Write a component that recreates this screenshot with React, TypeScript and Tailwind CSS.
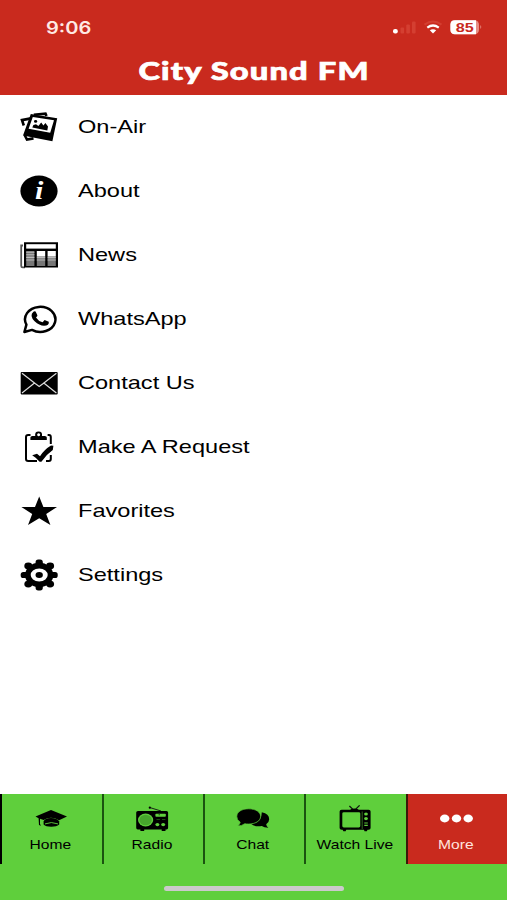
import type { ReactNode } from "react";

type TMenuItem = {
  label: string;
  icon: ReactNode;
};

const OnAirIcon = () => (
  <svg className="h-8 w-[38px]" viewBox="0 0 38 32">
    <path
      d="M11 7.4 2 9.1 3.8 14.5M13.8 3.8 25.5 2.6l1 2.4M4.6 24l2.4 4.6 6.5-1.2"
      fill="none"
      stroke="#000"
      strokeWidth="2.6"
    />
    <path
      fillRule="evenodd"
      d="M10.8 3 37.2 7.2 32.4 30.2 3 24.6ZM12.8 5.9 8.6 17.8 30.2 21.8 34 9.2Z"
    />
    <path d="M12.3 16.6 13.4 14 16 13.2 18.4 15 21.2 11.6 23.4 14.4 25.4 12 28 15.4 27.3 19.4Z" />
    <ellipse cx="15.6" cy="10.4" rx="1.6" ry="1.3" />
  </svg>
);

const AboutIcon = () => (
  <svg className="h-8 w-[38px]" viewBox="0 0 38 32">
    <ellipse cx="19" cy="16" rx="18.6" ry="15.5" />
    <text
      x="0"
      y="0"
      transform="translate(19.2 24) scale(1.2 1)"
      textAnchor="middle"
      fill="#fff"
      fontFamily="Liberation Serif"
      fontSize="25"
      fontStyle="italic"
      fontWeight="700"
    >
      i
    </text>
  </svg>
);

const NewsIcon = () => (
  <svg className="h-8 w-[38px]" viewBox="0 0 38 32">
    <path d="M3 6.5H1.2V27q0 1.3 1.5 1.3H5" fill="none" stroke="#555" strokeWidth="1.8" />
    <path d="M4 3.2h34v25.4H4Z" />
    <path d="M6.2 5.2h29.6v4.4H6.2Z" fill="#fff" />
    <path d="M6.2 12h8.2v15H6.2ZM16.8 17.2h8.4V27h-8.4ZM27.6 17.2h8.2V27h-8.2Z" fill="#777" />
    <path d="M16.8 12h8.4v5.4h-8.4ZM27.6 12h8.2v5.4h-8.2Z" fill="#fff" />
    <path
      d="M6.2 13.2h8.2M6.2 15.8h8.2M6.2 18.4h8.2M6.2 21h8.2M16.8 18.6h8.4M27.6 18.6h8.2M16.8 21h8.4M27.6 21h8.2"
      stroke="#bbb"
      strokeWidth="1.1"
    />
  </svg>
);

const WhatsAppIcon = () => (
  <svg className="h-8 w-[38px]" viewBox="0 0 38 32">
    <path
      d="M4.4 29 6.4 21.6A15.2 12.5 0 1 1 12 26.9Z"
      fill="none"
      stroke="#000"
      strokeWidth="2.5"
      strokeLinejoin="round"
    />
    <path d="M13.4 8.7q1-.6 2.2-.1l1.8 3.7q.2.7-1.4 2.1 2.2 3.6 6.6 4.8l2-2.2 4.2 1.8q.6 3.8-4.8 4-4.6-.2-9.4-4.5Q9.1 12.4 13.4 8.7Z" />
  </svg>
);

const MailIcon = () => (
  <svg className="h-8 w-[38px]" viewBox="0 0 38 32">
    <rect x=".7" y="5" width="37" height="22.4" rx="1" />
    <path
      d="M2 6.3 15.5 16.8 19.2 19.5 22.9 16.8 36.4 6.3M2 26 14.5 16M36.4 26 23.8 16"
      fill="none"
      stroke="#ddd"
      strokeWidth="1.2"
    />
  </svg>
);

const RequestIcon = () => (
  <svg className="h-8 w-[38px]" viewBox="0 0 38 32">
    <path
      d="M10.5 4H8.2Q6 4 6 6V28Q6 30 8.2 30H17M27.6 4H29Q30.8 4 30.8 6V13M30.8 24v4Q30.8 30 28.8 30H26"
      fill="none"
      stroke="#000"
      strokeWidth="2"
    />
    <path
      fillRule="evenodd"
      d="M10.4 9V6.6Q10.4 5.1 12.4 5H15.2Q14.6 .6 18.6 .6T22 5h2.8q2 0 2 1.6V9ZM18.6 2.3a1.5 1.5 0 1 0 .1 0Z"
    />
    <path d="M12.2 24.2 17 22.8 20 25.2Q24.6 18.4 31 14.6L33.4 14.8 32.8 19Q26.4 23.4 21.4 30.8L19.6 30.8Q16 26.4 12.2 24.2Z" />
  </svg>
);

const StarIcon = () => (
  <svg className="h-8 w-[38px]" viewBox="0 0 38 32">
    <path d="M19.2 1.4 23.4 12H37L26.2 18.9 30.4 30 19.2 23.2 8 30 12.2 18.9 1.4 12H15Z" />
  </svg>
);

const SettingsIcon = () => (
  <svg className="h-8 w-[38px]" viewBox="0 0 38 32">
    <ellipse cx="19.2" cy="16" rx="11.3" ry="9.4" fill="none" stroke="#000" strokeWidth="5.6" />
    <g>
      <rect x="15.6" y=".6" width="7.2" height="7" rx="2.6" />
      <rect x="15.6" y="24.4" width="7.2" height="7" rx="2.6" />
      <rect x=".7" y="12.9" width="8" height="6.2" rx="2.6" />
      <rect x="29.7" y="12.9" width="8" height="6.2" rx="2.6" />
      <ellipse cx="8.3" cy="6.9" rx="4" ry="3.4" />
      <ellipse cx="30.1" cy="6.9" rx="4" ry="3.4" />
      <ellipse cx="8.3" cy="25.1" rx="4" ry="3.4" />
      <ellipse cx="30.1" cy="25.1" rx="4" ry="3.4" />
    </g>
    <ellipse cx="19.2" cy="16" rx="3.7" ry="3" />
  </svg>
);

const HomeIcon = () => (
  <svg className="h-7 w-[34px]" viewBox="0 0 34 28">
    <path d="M1.5 11.6 17 5 33 11.6 25 15.2Q17 10.6 9.6 15L6 13.7V19L7 20.8 5 20 4.6 13.2Z" />
    <path d="M9.6 16.6Q10.6 13 17 13T25.2 16.6V19.6Q22.6 21.8 17.2 21.8T9.6 19.6Z" />
    <path d="M11 18.9Q17.2 16.2 24 18.9" fill="none" stroke="#5fcf3c" strokeWidth=".9" />
  </svg>
);

const RadioIcon = () => (
  <svg className="h-7 w-[34px]" viewBox="0 0 34 28">
    <path d="M15 2.6 26 6" stroke="#111" strokeWidth=".9" />
    <circle cx="14.8" cy="2.7" r="1.1" />
    <path d="M3 6h28.5q1.6 0 1.6 1.6v15.2q0 1.6-1.6 1.6H30.5v1.5h-3.8v-1.5H9.2v1.5H5.4v-1.5H2.8q-1.6 0-1.6-1.6V7.6Q1.2 6 3 6Z" />
    <ellipse cx="10.6" cy="15" rx="7.6" ry="6.5" fill="#5fcf3c" />
    <ellipse cx="10.6" cy="15" rx="6.2" ry="5.2" fill="#47a62d" />
    <rect x="20.4" y="8.7" width="10.4" height="3" rx=".8" fill="#5fcf3c" />
    <path d="M24.2 8.5v1.8M21.5 14.5h3.4M27 14.5h3.4" stroke="#174d0e" strokeWidth="1" />
    <ellipse cx="22.4" cy="19.6" rx="2" ry="1.7" fill="#5fcf3c" />
    <ellipse cx="28.2" cy="19.6" rx="2" ry="1.7" fill="#5fcf3c" />
  </svg>
);

const ChatIcon = () => (
  <svg className="h-7 w-[34px]" viewBox="0 0 34 28">
    <path d="M25.8 7.2Q33.2 8.8 33.2 14.2 33.2 17 30.2 19.2 30.4 21.2 32.4 22.8 28 22.5 25.8 21 18.8 22.2 14.8 18.8 25.8 18 25.8 7.2Z" />
    <path
      d="M12.6 3.8C19.6 3.8 24.6 7 24.6 11.4S19.6 19 12.6 19Q10.5 19 8.8 18.7 6 20.8 1.8 21.1 4 19.1 4.2 17.1.8 15 .8 11.4C.8 7 5.6 3.8 12.6 3.8Z"
      stroke="#5fcf3c"
      strokeWidth=".7"
    />
  </svg>
);

const TvIcon = () => (
  <svg className="h-7 w-[34px]" viewBox="0 0 34 28">
    <path d="M11.4 1 16.2 5.6 21.6.4" fill="none" stroke="#111" strokeWidth="1.3" />
    <path d="M11.8 5.4q.8-2 4.6-2t4.8 2Z" />
    <path
      fillRule="evenodd"
      d="M3.6 4.8h27q2 0 2 1.8V23q0 1.8-2 1.8h-1l-.8 1.5h-2.2l-.7-1.5H8.3l-.7 1.5H5.4l-.8-1.5h-1q-2 0-2-1.8V6.6q0-1.8 2-1.8ZM5.8 7.2q-1.5 0-1.5 1.3v12.6q0 1.3 1.5 1.3h15q1.5 0 1.5-1.3V8.5q0-1.3-1.5-1.3Z"
    />
    <path d="M24.2 6.5v17.5" stroke="#5fcf3c" strokeWidth=".5" />
    <ellipse cx="28" cy="9" rx="1.9" ry="1.6" fill="#5fcf3c" />
    <ellipse cx="28" cy="13.6" rx="1.9" ry="1.6" fill="#5fcf3c" />
    <path d="M26.3 18h3.5M26.3 20.4h3.5" stroke="#5fcf3c" strokeWidth="1.2" />
  </svg>
);

const MoreIcon = () => (
  <svg className="h-7 w-[34px]" viewBox="0 0 34 28" fill="#fff">
    <ellipse cx="5.7" cy="13.5" rx="4.7" ry="3.9" />
    <ellipse cx="17.5" cy="13.5" rx="4.7" ry="3.9" />
    <ellipse cx="29.2" cy="13.5" rx="4.7" ry="3.9" />
  </svg>
);

const menuItems: TMenuItem[] = [
  { label: "On-Air", icon: <OnAirIcon /> },
  { label: "About", icon: <AboutIcon /> },
  { label: "News", icon: <NewsIcon /> },
  { label: "WhatsApp", icon: <WhatsAppIcon /> },
  { label: "Contact Us", icon: <MailIcon /> },
  { label: "Make A Request", icon: <RequestIcon /> },
  { label: "Favorites", icon: <StarIcon /> },
  { label: "Settings", icon: <SettingsIcon /> },
];

const tabs: TMenuItem[] = [
  { label: "Home", icon: <HomeIcon /> },
  { label: "Radio", icon: <RadioIcon /> },
  { label: "Chat", icon: <ChatIcon /> },
  { label: "Watch Live", icon: <TvIcon /> },
  { label: "More", icon: <MoreIcon /> },
];

const StatusBar = () => (
  <div className="flex h-[54px] items-center justify-between pr-[25px] pl-[46px]">
    <span className="mt-0.5 origin-left scale-x-[1.18] font-['Inter'] text-[17px] leading-none font-semibold text-[#ffe9e4]">
      9:06
    </span>
    <svg className="h-4 w-[90px]" viewBox="0 0 90 16">
      <g fill="#d43f31">
        <rect x="8.5" y="8.5" width="3.6" height="6" rx="1" />
        <rect x="14.3" y="5.5" width="3.6" height="9" rx="1" />
        <rect x="20" y="2.5" width="3.6" height="12" rx="1" />
      </g>
      <rect x="1" y="10" width="4.8" height="4.6" rx="2" fill="#fff" />
      <path d="M32.5 5.6Q41 -.6 49.5 5.6" fill="none" stroke="#d43f31" strokeWidth="2" />
      <path d="M35.3 8.6Q41 4.4 46.8 8.6" fill="none" stroke="#fff" strokeWidth="2.2" />
      <path d="M37.8 11.2q3.2-2 6.4 0L41 14.4Z" fill="#fff" />
      <rect x="58.4" y="1.2" width="28.6" height="14" rx="4.4" fill="#e88d84" />
      <path d="M62.8 1.2H84v14H62.8q-4.4 0-4.4-4.4V5.6q0-4.4 4.4-4.4Z" fill="#fff" />
      <path d="M88.3 6v4q1.9-2 0-4Z" fill="#e88d84" />
      <text
        transform="translate(72.7 12.9) scale(1.2 1)"
        textAnchor="middle"
        fill="#c92a1e"
        fontFamily="Liberation Sans"
        fontSize="13.5"
        fontWeight="700"
      >
        85
      </text>
    </svg>
  </div>
);

const App = () => {
  return (
    <div className="flex h-[900px] w-[507px] flex-col overflow-hidden bg-white font-['Liberation_Sans',sans-serif] text-black">
      <header className="h-[95px] bg-[#c92a1e] text-white">
        <StatusBar />
        <h1 className="flex h-[34px] items-center justify-center font-['Lato'] text-[24px] leading-none font-black">
          <span className="scale-x-[1.36] tracking-[0.035em] [-webkit-text-stroke:0.7px_white]">
            City Sound FM
          </span>
        </h1>
      </header>

      <ul className="flex-1">
        {menuItems.map((item) => (
          <li key={item.label} className="flex h-16 items-center gap-5 pl-5">
            {item.icon}
            <span className="-mt-px origin-left scale-x-[1.24] text-[19px] leading-none whitespace-nowrap">
              {item.label}
            </span>
          </li>
        ))}
      </ul>

      <footer className="h-[106px] bg-[#5fcf3c]">
        <nav className="grid h-[70px] grid-cols-[102px_101px_101px_102px_101px]">
          {tabs.map((tab) => (
            <button
              key={tab.label}
              className="flex flex-col items-center border-l-2 border-[#1b5410] pt-[11px] pr-[3px] first:border-black last:border-[#3a1a08] last:bg-[#c92a1e] last:text-[#ffe3df]"
            >
              {tab.icon}
              <span className="mt-1 scale-x-[1.2] text-[13px] leading-4 whitespace-nowrap">
                {tab.label}
              </span>
            </button>
          ))}
        </nav>
        <div className="mx-auto mt-[22px] h-[5px] w-[180px] rounded-full bg-[#cbcacb]"></div>
      </footer>
    </div>
  );
};

export default App;
